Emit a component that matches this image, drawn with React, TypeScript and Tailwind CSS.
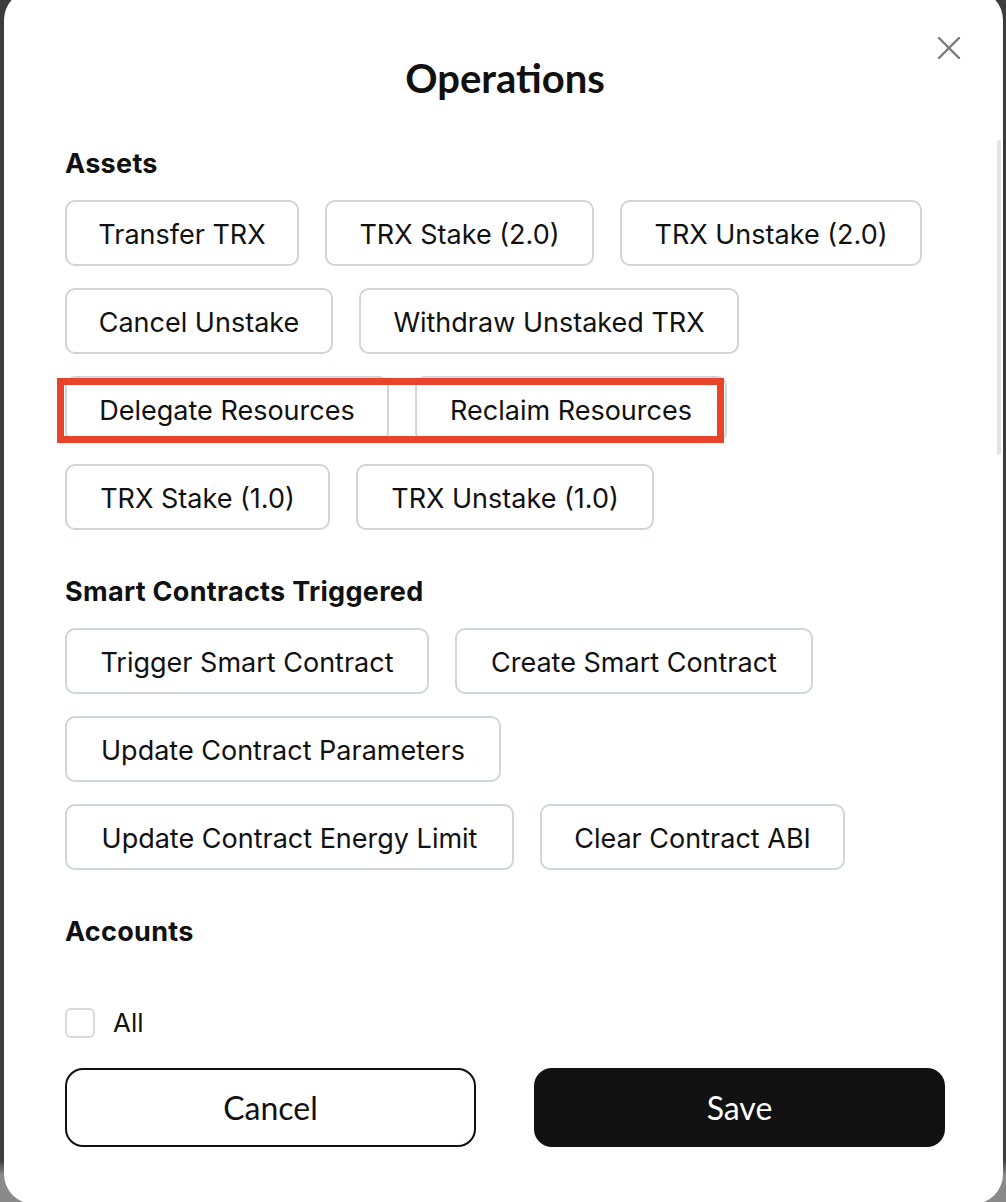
import React from "react";

const rows1: [string, number][][] = [
  [["Transfer TRX", 234], ["TRX Stake (2.0)", 269], ["TRX Unstake (2.0)", 302]],
  [["Cancel Unstake", 268], ["Withdraw Unstaked TRX", 380]],
];
const rowDelegate: [string, number][] = [["Delegate Resources", 324], ["Reclaim Resources", 312]];
const rows1b: [string, number][][] = [[["TRX Stake (1.0)", 265], ["TRX Unstake (1.0)", 298]]];
const rows2: [string, number][][] = [
  [["Trigger Smart Contract", 364], ["Create Smart Contract", 358]],
  [["Update Contract Parameters", 436]],
  [["Update Contract Energy Limit", 449], ["Clear Contract ABI", 305]],
];

function OpButton({ label, w }: { label: string; w: number }) {
  return (
    <button
      className="h-[66px] shrink-0 rounded-[10px] border-2 border-[#d0d4db] bg-white pt-[4px] text-[27px] text-[#111] flex items-center justify-center"
      style={{ width: w, fontFamily: "Inter, 'Noto Sans', sans-serif" }}
    >
      {label}
    </button>
  );
}

function Row({ items }: { items: [string, number][] }) {
  return (
    <div className="flex gap-x-[26px]">
      {items.map(([l, w]) => (
        <OpButton key={l} label={l} w={w} />
      ))}
    </div>
  );
}

export default function App() {
  return (
    <div className="h-[1202px] w-full overflow-hidden bg-[linear-gradient(to_bottom,#3c3c3c_0px,#3c3c3c_1160px,#8a8a8a_1175px,#8a8a8a_100%)]">
      <div className="relative ml-[4px] mt-[-10px] h-[1214px] w-[999px] rounded-[30px] bg-white pl-[61px] pr-[58px] pt-[64px]">
        {/* close */}
        <button className="absolute right-[42px] top-[46px] h-[24px] w-[24px]">
          <svg viewBox="0 0 24 24" width="24" height="24" fill="none" stroke="#7a7a7a" strokeWidth="2.4" strokeLinecap="round">
            <line x1="2" y1="2" x2="22" y2="22" />
            <line x1="22" y1="2" x2="2" y2="22" />
          </svg>
        </button>
        {/* scrollbar */}
        <div className="absolute right-[2px] top-[150px] h-[315px] w-[4px] rounded-full bg-[#e2e4e8]" />

        <h1
          className="text-center text-[40px] leading-[48px] font-bold text-[#111]"
          style={{ fontFamily: "Lato, 'Noto Sans', sans-serif" }}
        >
          Operations
        </h1>

        <div style={{ fontFamily: "Inter, 'Noto Sans', sans-serif" }}>
          <h2 className="mt-[47px] text-[27px] leading-[30px] tracking-[0.3px] font-bold text-[#111]">Assets</h2>
          <div className="mt-[21px] flex flex-col gap-y-[22px]">
            {rows1.map((r, i) => (
              <Row key={i} items={r} />
            ))}
            <div className="relative">
              <Row items={rowDelegate} />
              <div className="absolute left-[-8px] top-[2px] h-[65px] w-[667px] border-[7px] border-[#e8432b]" />
            </div>
            {rows1b.map((r, i) => (
              <Row key={i} items={r} />
            ))}
          </div>

          <h2 className="mt-[47px] text-[27px] leading-[30px] tracking-[0.3px] font-bold text-[#111]">Smart Contracts Triggered</h2>
          <div className="mt-[21px] flex flex-col gap-y-[22px]">
            {rows2.map((r, i) => (
              <Row key={i} items={r} />
            ))}
          </div>

          <h2 className="mt-[47px] text-[27px] leading-[30px] tracking-[0.3px] font-bold text-[#111]">Accounts</h2>
          <label className="mt-[61px] flex items-center gap-[18px]">
            <span className="h-[30px] w-[30px] shrink-0 rounded-[6px] border-2 border-[#d9d9d9] bg-white" />
            <span className="text-[26px] leading-[30px] text-[#111]">All</span>
          </label>
        </div>

        <div className="mt-[30px] grid grid-cols-2 gap-x-[58px]" style={{ fontFamily: "Lato, 'Noto Sans', sans-serif" }}>
          <button className="h-[79px] rounded-[18px] border-2 border-[#111] bg-white text-[32px] text-[#111]">Cancel</button>
          <button className="h-[79px] rounded-[18px] bg-[#111] text-[32px] text-white">Save</button>
        </div>
      </div>
    </div>
  );
}
